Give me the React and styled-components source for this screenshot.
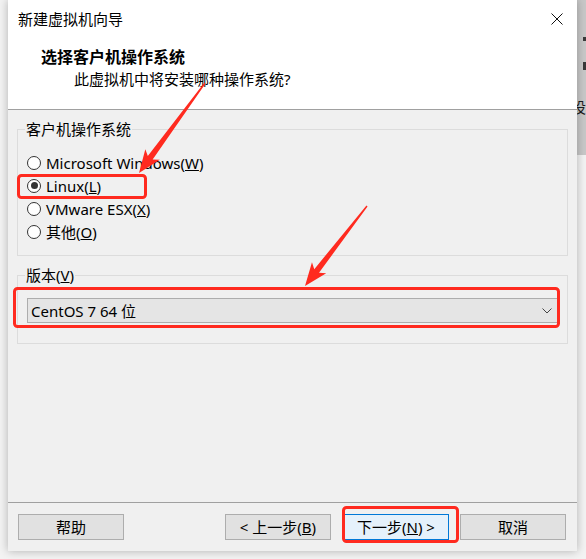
import React from 'react';
import styled, { createGlobalStyle } from 'styled-components';

const GlobalStyle = createGlobalStyle`
  html, body {
    margin: 0;
    padding: 0;
    background: #f3f3f3;
  }
  body {
    font-family: "Noto Sans", "Noto Sans CJK SC", sans-serif;
    color: #000;
  }
`;

const Page = styled.div`
  position: relative;
  display: flex;
  width: 586px;
  height: 559px;
  overflow: hidden;
  background: #f3f3f3;
`;

const Gutter = styled.div`
  width: 8px;
  flex: none;
`;

const Dialog = styled.div`
  width: 569px;
  height: 551px;
  flex: none;
  display: flex;
  flex-direction: column;
  background: #f0f0f0;
  box-shadow: 0 0 9px rgba(0, 0, 0, 0.28);
  position: relative;
  z-index: 1;
`;

const RightStrip = styled.div`
  flex: 1;
  display: flex;
  flex-direction: column;
`;

const BackApp = styled.div`
  height: 155px;
  background: #c8c8c8;
  position: relative;
  overflow: hidden;
`;

const Mark = styled.div`
  position: absolute;
  left: 6px;
  top: ${p => p.top}px;
  width: 3px;
  height: ${p => p.h}px;
  background: #3a3a3a;
`;

const Fragment = styled.span`
  position: absolute;
  left: -6px;
  top: 96px;
  font: 15px "Noto Sans CJK SC", sans-serif;
  color: #1c1c1c;
`;

const TitleBar = styled.div`
  height: 38px;
  background: #fff;
  display: flex;
  align-items: center;
  justify-content: space-between;
  padding: 0 14px 0 10px;
`;

const Title = styled.span`
  font-size: 15px;
  line-height: 20px;
`;

const Header = styled.div`
  background: #fff;
  height: 72px;
  padding-top: 8px;
  box-sizing: border-box;
  border-bottom: 1px solid #a0a0a0;
`;

const Heading = styled.div`
  font-size: 16px;
  font-weight: bold;
  line-height: 22px;
  padding-left: 33px;
`;

const Sub = styled.div`
  font-size: 15px;
  line-height: 22px;
  padding-left: 66px;
`;

const Body = styled.div`
  flex: 1;
  display: flex;
  flex-direction: column;
  gap: 9px;
  padding: 9px 9px 0;
`;

const Group = styled.fieldset`
  margin: 0;
  min-width: 0;
  border: 1px solid #dcdcdc;
  padding: 0 9px ${p => p.bottom}px;
`;

const Legend = styled.legend`
  font-size: 15px;
  line-height: 20px;
  padding: 0 1px;
  margin-left: -2px;
`;

const RadioList = styled.div`
  margin-top: 12px;
  display: flex;
  flex-direction: column;
`;

const RadioRow = styled.label`
  height: 23px;
  display: flex;
  align-items: center;
  gap: 5px;
  font-size: 15px;
`;

const Circle = styled.span`
  width: 14px;
  height: 14px;
  flex: none;
  box-sizing: border-box;
  border: 1px solid #333;
  border-radius: 50%;
  background: #fff;
  display: flex;
  align-items: center;
  justify-content: center;
  &::after {
    content: '';
    width: 7px;
    height: 7px;
    border-radius: 50%;
    background: ${p => (p.checked ? '#333' : 'transparent')};
  }
`;

const Select = styled.div`
  margin-top: 13px;
  height: 25px;
  box-sizing: border-box;
  border: 1px solid #adadad;
  background: #e5e5e5;
  display: flex;
  align-items: center;
  justify-content: space-between;
  padding: 0 5px 0 3px;
  font-size: 15px;
`;

const Footer = styled.div`
  border-top: 1px solid #a0a0a0;
  padding: 11px 11px 11px 10px;
  display: flex;
  align-items: center;
`;

const Spacer = styled.div`
  flex: 1;
`;

const Button = styled.button`
  width: 106px;
  height: 26px;
  margin-left: ${p => p.gap || 0}px;
  box-sizing: border-box;
  border: 1px solid ${p => (p.primary ? '#0078d7' : '#adadad')};
  background: ${p => (p.primary ? '#e5f1fb' : '#e1e1e1')};
  font-family: "Noto Sans", "Noto Sans CJK SC", sans-serif;
  font-size: 15px;
  color: #000;
  padding: 0;
  line-height: 24px;
`;

const Overlay = styled.svg`
  position: absolute;
  left: 0;
  top: 0;
  z-index: 2;
  pointer-events: none;
`;

const Arrow = ({ x1, y1, x2, y2 }) => {
  const dx = x2 - x1;
  const dy = y2 - y1;
  const L = Math.sqrt(dx * dx + dy * dy);
  const a = (Math.atan2(dy, dx) * 180) / Math.PI;
  const pts = [
    [0, -0.7], [L - 19, -3], [L - 23, -9], [L, 0],
    [L - 23, 9], [L - 19, 3], [0, 0.7],
  ].map(p => p.join(',')).join(' ');
  return (
    <polygon points={pts} fill="#ff2a1f" transform={`translate(${x1} ${y1}) rotate(${a})`} />
  );
};

const Box = ({ x, y, w, h }) => (
  <rect x={x + 1.5} y={y + 1.5} width={w - 3} height={h - 3} rx="3" fill="none" stroke="#ff2a1f" strokeWidth="3" />
);

const options = [
  { label: 'Microsoft Windows', key: 'W' },
  { label: 'Linux', key: 'L', checked: true },
  { label: 'VMware ESX', key: 'X' },
  { label: '其他', key: 'O' },
];

export default function App() {
  return (
    <Page>
      <GlobalStyle />
      <Gutter />
      <Dialog>
        <TitleBar>
          <Title>新建虚拟机向导</Title>
          <svg width="12" height="12" viewBox="0 0 12 12">
            <path d="M0.5 0.5L11.5 11.5M11.5 0.5L0.5 11.5" stroke="#111" strokeWidth="1" />
          </svg>
        </TitleBar>
        <Header>
          <Heading>选择客户机操作系统</Heading>
          <Sub>此虚拟机中将安装哪种操作系统?</Sub>
        </Header>
        <Body>
          <Group bottom={12}>
            <Legend>客户机操作系统</Legend>
            <RadioList>
              {options.map(o => (
                <RadioRow key={o.key}>
                  <Circle checked={o.checked} />
                  <span>{o.label}(<u>{o.key}</u>)</span>
                </RadioRow>
              ))}
            </RadioList>
          </Group>
          <Group bottom={20}>
            <Legend>版本(<u>V</u>)</Legend>
            <Select>
              <span>CentOS 7 64 位</span>
              <svg width="10" height="6" viewBox="0 0 10 6">
                <polyline points="0.5,0.5 5,5 9.5,0.5" fill="none" stroke="#444" strokeWidth="1" />
              </svg>
            </Select>
          </Group>
        </Body>
        <Footer>
          <Button>帮助</Button>
          <Spacer />
          <Button>&lt; 上一步(<u>B</u>)</Button>
          <Button primary gap={12}>下一步(<u>N</u>) &gt;</Button>
          <Button gap={11}>取消</Button>
        </Footer>
      </Dialog>
      <RightStrip>
        <BackApp>
          <Mark top={37} h={4} />
          <Mark top={62} h={8} />
          <Fragment>设</Fragment>
        </BackApp>
      </RightStrip>
      <Overlay width="586" height="559" viewBox="0 0 586 559">
        <Box x={17} y={174} w={130} h={25} />
        <Box x={13} y={287} w={547} h={41} />
        <Box x={342} y={506} w={117} h={37} />
        <Arrow x1={205} y1={83} x2={139} y2={173} />
        <Arrow x1={367} y1={206} x2={305} y2={286} />
      </Overlay>
    </Page>
  );
}
